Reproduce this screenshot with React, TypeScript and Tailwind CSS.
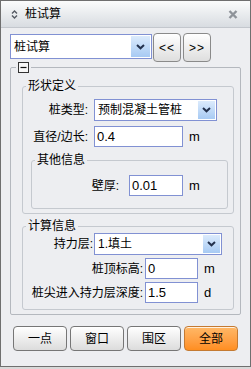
import React from "react";

const FONT = "font-['Liberation_Sans','Noto_Sans_CJK_SC',sans-serif]";
const BG = "bg-[#edeef1]";

function Chevron() {
  return (
    <svg width="9" height="6" viewBox="0 0 9 6">
      <path d="M1 1l3.5 3.3L8 1" fill="none" stroke="#23314d" strokeWidth="2" />
    </svg>
  );
}

function Combo({ value, className, arrowW = 17 }: { value: string; className: string; arrowW?: number }) {
  return (
    <div className={`flex items-stretch border border-[#8191d3] bg-white p-px ${className}`}>
      <span className="flex flex-1 items-center pl-[2px] text-[12px] leading-none">{value}</span>
      <span
        className="flex items-center justify-center bg-gradient-to-b from-[#dcebfc] to-[#a7caf3]"
        style={{ width: arrowW }}
      >
        <Chevron />
      </span>
    </div>
  );
}

function Field({ value, className }: { value: string; className: string }) {
  return (
    <div className={`flex items-center border border-[#8191d3] bg-white pl-[2px] text-[13px] leading-none ${className}`}>
      {value}
    </div>
  );
}

function Group({ title, className, children }: { title: string; className: string; children?: React.ReactNode }) {
  return (
    <div className={`relative flex flex-col rounded-[3px] border border-[#c5c9cf] ${className}`}>
      <span className={`absolute left-[3px] top-[-8px] ${BG} px-[2px] text-[12px] leading-[14px]`}>{title}</span>
      {children}
    </div>
  );
}

function Btn({ label, orange }: { label: string; orange?: boolean }) {
  return (
    <button
      className={`flex h-[25px] w-[54px] items-center justify-center rounded-[4px] border text-[12px] leading-none shadow-[inset_0_1px_0_rgba(255,255,255,0.8)] ${
        orange
          ? "border-[#c47a32] bg-gradient-to-b from-[#ffb866] to-[#ff8e1f]"
          : "border-[#767676] bg-gradient-to-b from-[#ffffff] to-[#dcdcdc]"
      }`}
    >
      {label}
    </button>
  );
}

function SmallBtn({ label }: { label: string }) {
  return (
    <button className="flex h-[29px] w-[28px] items-center justify-center rounded-[4px] border border-[#8a8a8a] bg-gradient-to-b from-[#ffffff] to-[#dedede] text-[12px] leading-none tracking-[1px]">
      {label}
    </button>
  );
}

export default function App() {
  return (
    <div className={`h-[369px] w-[251px] bg-[#d8d8d8] text-black ${FONT}`}>
      <div className={`flex h-[367px] flex-col border border-[#6f6f6f] ${BG}`}>
        {/* title bar */}
        <div className="flex h-[27px] shrink-0 items-center border-b border-[#c3c7cd] bg-gradient-to-b from-[#fbfcfc] to-[#d8dce1] pl-[10px] pr-[12px]">
          <svg width="7" height="9" viewBox="0 0 7 9">
            <path d="M1 3.5L3.5 1L6 3.5M1 5.5L3.5 8L6 5.5" fill="none" stroke="#555b63" strokeWidth="1.4" />
          </svg>
          <span className="ml-[7px] text-[12px] leading-none">桩试算</span>
          <span className="flex-1" />
          <svg width="10" height="9" viewBox="0 0 10 9">
            <path d="M1.5 1L8.5 8M8.5 1L1.5 8" stroke="#8e9399" strokeWidth="2.4" />
          </svg>
        </div>

        <div className="flex flex-col pl-[9px] pr-[9px]">
          {/* top combo row */}
          <div className="mt-[5px] flex items-start">
            <Combo value="桩试算" className="mt-[1px] h-[25px] w-[142px]" arrowW={19} />
            <div className="ml-[1px] flex gap-[2px]">
              <SmallBtn label="<<" />
              <SmallBtn label=">>" />
            </div>
          </div>

          {/* outer group */}
          <div className="relative mt-[5px] flex h-[248px] w-[231px] flex-col rounded-[2px] border border-[#b4b8be]">
            <span className={`absolute left-[5px] top-[-6px] ${BG} px-[2px]`}>
              <svg width="11" height="11" viewBox="0 0 11 11" className="block">
                <rect x="0.5" y="0.5" width="10" height="10" fill="#f7f7f7" stroke="#333" />
                <path d="M2.5 5.5h6" stroke="#111" strokeWidth="1.2" />
              </svg>
            </span>

            <Group title="形状定义" className="ml-[11px] mt-[18px] h-[128px] w-[212px]">
              <div className="mt-[12px] flex items-center">
                <span className="w-[65px] text-right text-[12px] leading-none">桩类型:</span>
                <Combo value="预制混凝土管桩" className="ml-[6px] h-[22px] w-[123px]" />
              </div>
              <div className="mt-[5px] flex items-center">
                <span className="w-[65px] text-right text-[12px] leading-none">直径/边长:</span>
                <Field value="0.4" className="ml-[6px] h-[21px] w-[89px]" />
                <span className="ml-[6px] text-[13px] leading-none">m</span>
              </div>
              <Group title="其他信息" className="ml-[8px] mt-[13px] h-[49px] w-[197px]">
                <div className="mt-[14px] flex items-center">
                  <span className="w-[87px] text-right text-[12px] leading-none">壁厚:</span>
                  <Field value="0.01" className="ml-[10px] h-[21px] w-[54px]" />
                  <span className="ml-[6px] text-[13px] leading-none">m</span>
                </div>
              </Group>
            </Group>

            <Group title="计算信息" className="ml-[11px] mt-[12px] h-[84px] w-[212px]">
              <div className="mt-[6px] flex items-center">
                <span className="w-[70px] text-right text-[12px] leading-none">持力层:</span>
                <Combo value="1.填土" className="ml-[1px] h-[22px] w-[128px]" />
              </div>
              <div className="mt-[3px] flex items-center">
                <span className="w-[120px] text-right text-[12px] leading-none">桩顶标高:</span>
                <Field value="0" className="ml-[2px] h-[21px] w-[53px]" />
                <span className="ml-[6px] text-[13px] leading-none">m</span>
              </div>
              <div className="mt-[3px] flex items-center">
                <span className="w-[120px] whitespace-nowrap text-right text-[12px] leading-none">桩尖进入持力层深度:</span>
                <Field value="1.5" className="ml-[2px] h-[21px] w-[53px]" />
                <span className="ml-[6px] text-[13px] leading-none">d</span>
              </div>
            </Group>
          </div>

          {/* buttons */}
          <div className="ml-[3px] mt-[11px] flex gap-[3px]">
            <Btn label="一点" />
            <Btn label="窗口" />
            <Btn label="围区" />
            <Btn label="全部" orange />
          </div>
        </div>
      </div>
    </div>
  );
}
